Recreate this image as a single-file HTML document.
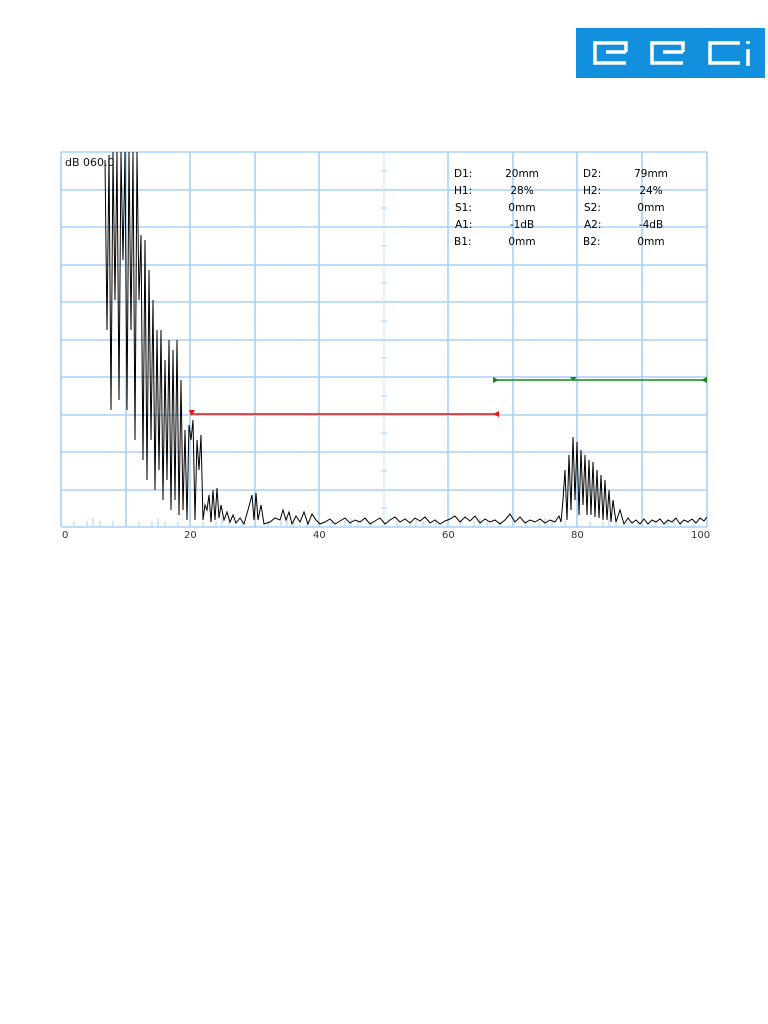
<!DOCTYPE html>
<html><head><meta charset="utf-8"><style>
html,body{margin:0;padding:0;background:#fff;width:768px;height:1024px;overflow:hidden}
svg{position:absolute;left:0;top:0}
</style></head><body>
<svg width="768" height="1024" viewBox="0 0 768 1024" xmlns="http://www.w3.org/2000/svg">
<!-- logo -->
<rect x="576" y="28" width="189" height="50" fill="#1390dd"/>
<g fill="none" stroke="#fff" stroke-width="3.5" stroke-linejoin="miter">
<path d="M626 52 V43 H595 V63 H626 M626 52 H606"/>
<path d="M683 52 V43 H652 V63 H683 M683 52 H663"/>
<path d="M740 43 H710 V63 H740"/>
<path d="M748 49 V66 M748 41 V44"/>
</g>
<!-- grid -->
<g stroke="#a8d2f7" stroke-width="1.6">
<line x1="61" y1="152" x2="707" y2="152"/>
<line x1="61" y1="190" x2="707" y2="190"/>
<line x1="61" y1="227" x2="707" y2="227"/>
<line x1="61" y1="265" x2="707" y2="265"/>
<line x1="61" y1="302" x2="707" y2="302"/>
<line x1="61" y1="340" x2="707" y2="340"/>
<line x1="61" y1="377" x2="707" y2="377"/>
<line x1="61" y1="415" x2="707" y2="415"/>
<line x1="61" y1="452" x2="707" y2="452"/>
<line x1="61" y1="490" x2="707" y2="490"/>
<line x1="61" y1="527" x2="707" y2="527"/>
<line x1="61" y1="152" x2="61" y2="527"/>
<line x1="126" y1="152" x2="126" y2="527"/>
<line x1="190" y1="152" x2="190" y2="527"/>
<line x1="255" y1="152" x2="255" y2="527"/>
<line x1="319" y1="152" x2="319" y2="527"/>
<line x1="448" y1="152" x2="448" y2="527"/>
<line x1="513" y1="152" x2="513" y2="527"/>
<line x1="577" y1="152" x2="577" y2="527"/>
<line x1="642" y1="152" x2="642" y2="527"/>
<line x1="707" y1="152" x2="707" y2="527"/>
</g>
<line x1="384" y1="152" x2="384" y2="527" stroke="#c8e3fa" stroke-width="1"/>
<g stroke="#a8d2f7" stroke-width="1">
<path d="M381 171H387M381 208H387M381 246H387M381 283H387M381 321H387M381 358H387M381 396H387M381 433H387M381 471H387M381 508H387"/>
<path d="M74 527V521M87 527V521M100 527V521M113 527V521M139 527V521M152 527V521M165 527V521M178 527V521M203 527V521M216 527V521M229 527V521M242 527V521M268 527V521M281 527V521M294 527V521M307 527V521M332 527V521M345 527V521M358 527V521M371 527V521M397 527V521M410 527V521M423 527V521M436 527V521M461 527V521M474 527V521M487 527V521M500 527V521M526 527V521M539 527V521M552 527V521M565 527V521M590 527V521M603 527V521M616 527V521M629 527V521M655 527V521M668 527V521M681 527V521M694 527V521"/>
<path d="M93 527V518M158 527V518M222 527V518M287 527V518M351 527V518M416 527V518M480 527V518M545 527V518M609 527V518M674 527V518"/>
</g>
<!-- waveform -->
<polyline fill="none" stroke="#000" stroke-width="1" points="105,160 107,330 109,155 111,410 113,152 115,300 117,152 119,400 121,152 123,260 125,152 127,410 129,152 131,330 133,152 135,440 137,152 139,300 141,235 143,460 145,240 147,480 149,270 151,440 153,300 155,490 157,330 159,470 161,330 163,500 165,360 167,480 169,340 171,510 173,350 175,500 177,340 179,515 181,380 183,510 185,430 187,520 189,425 191,440 193,420 195,520 197,440 199,470 201,435 203,520 205,505 207,510 209,495 211,522 213,490 215,520 217,488 219,518 221,505 224,520 227,512 230,522 233,515 236,523 240,518 244,524 248,510 252,495 254,520 256,493 258,520 261,505 264,524 270,522 275,518 280,520 283,510 286,520 289,512 292,524 296,516 300,522 304,512 308,524 312,514 316,520 320,524 325,522 330,519 335,524 340,521 345,518 350,523 355,520 360,522 365,518 370,524 375,521 380,518 385,524 390,520 395,517 400,522 405,519 410,523 415,518 420,521 425,517 430,523 435,520 440,524 445,521 450,519 455,516 460,522 465,517 470,521 475,516 480,523 485,519 490,522 495,520 500,524 505,520 510,514 515,522 520,517 525,523 530,520 535,522 540,519 545,523 550,520 555,522 559,516 561,522 563,500 565,470 567,520 569,455 571,510 573,437 575,500 577,442 579,515 581,450 583,505 585,455 587,515 589,460 591,515 593,462 595,517 597,470 599,518 601,475 603,520 605,480 607,520 609,490 611,522 613,500 616,522 620,510 624,524 628,518 632,523 636,520 640,524 644,519 648,524 652,520 656,522 660,519 664,524 668,520 672,522 676,518 680,524 684,520 688,522 692,519 696,523 700,518 704,521 707,517"/>
<!-- gates -->
<line x1="191" y1="414" x2="498" y2="414" stroke="#f01010" stroke-width="1.6"/>
<path d="M189 410 L195 410 L191 416 Z M493 414 L499 411 L499 417 Z" fill="#f01010"/>
<line x1="494" y1="380" x2="707" y2="380" stroke="#138a13" stroke-width="1.6"/>
<path d="M493 377 L499 380 L493 383 Z M570 377 L577 377 L573 381 Z M707 377 L701 380 L707 383 Z" fill="#138a13"/>
<!-- labels -->
<g font-family="'DejaVu Sans','Liberation Sans',sans-serif" font-size="10" fill="#333">
<text x="62" y="538">0</text>
<text x="184" y="538">20</text>
<text x="313" y="538">40</text>
<text x="442" y="538">60</text>
<text x="571" y="538">80</text>
<text x="691" y="538">100</text>
</g>
<text x="65" y="166" font-family="'DejaVu Sans','Liberation Sans',sans-serif" font-size="11" fill="#111">dB  060.0</text>
<g font-family="'DejaVu Sans','Liberation Sans',sans-serif" font-size="10.5" fill="#000">
<text x="454" y="177">D1:</text><text x="522" y="177" text-anchor="middle">20mm</text>
<text x="583" y="177">D2:</text><text x="651" y="177" text-anchor="middle">79mm</text>
<text x="454" y="194">H1:</text><text x="522" y="194" text-anchor="middle">28%</text>
<text x="583" y="194">H2:</text><text x="651" y="194" text-anchor="middle">24%</text>
<text x="455" y="211">S1:</text><text x="522" y="211" text-anchor="middle">0mm</text>
<text x="584" y="211">S2:</text><text x="651" y="211" text-anchor="middle">0mm</text>
<text x="455" y="228">A1:</text><text x="522" y="228" text-anchor="middle">-1dB</text>
<text x="584" y="228">A2:</text><text x="651" y="228" text-anchor="middle">-4dB</text>
<text x="454" y="245">B1:</text><text x="522" y="245" text-anchor="middle">0mm</text>
<text x="583" y="245">B2:</text><text x="651" y="245" text-anchor="middle">0mm</text>
</g>
</svg>
</body></html>
